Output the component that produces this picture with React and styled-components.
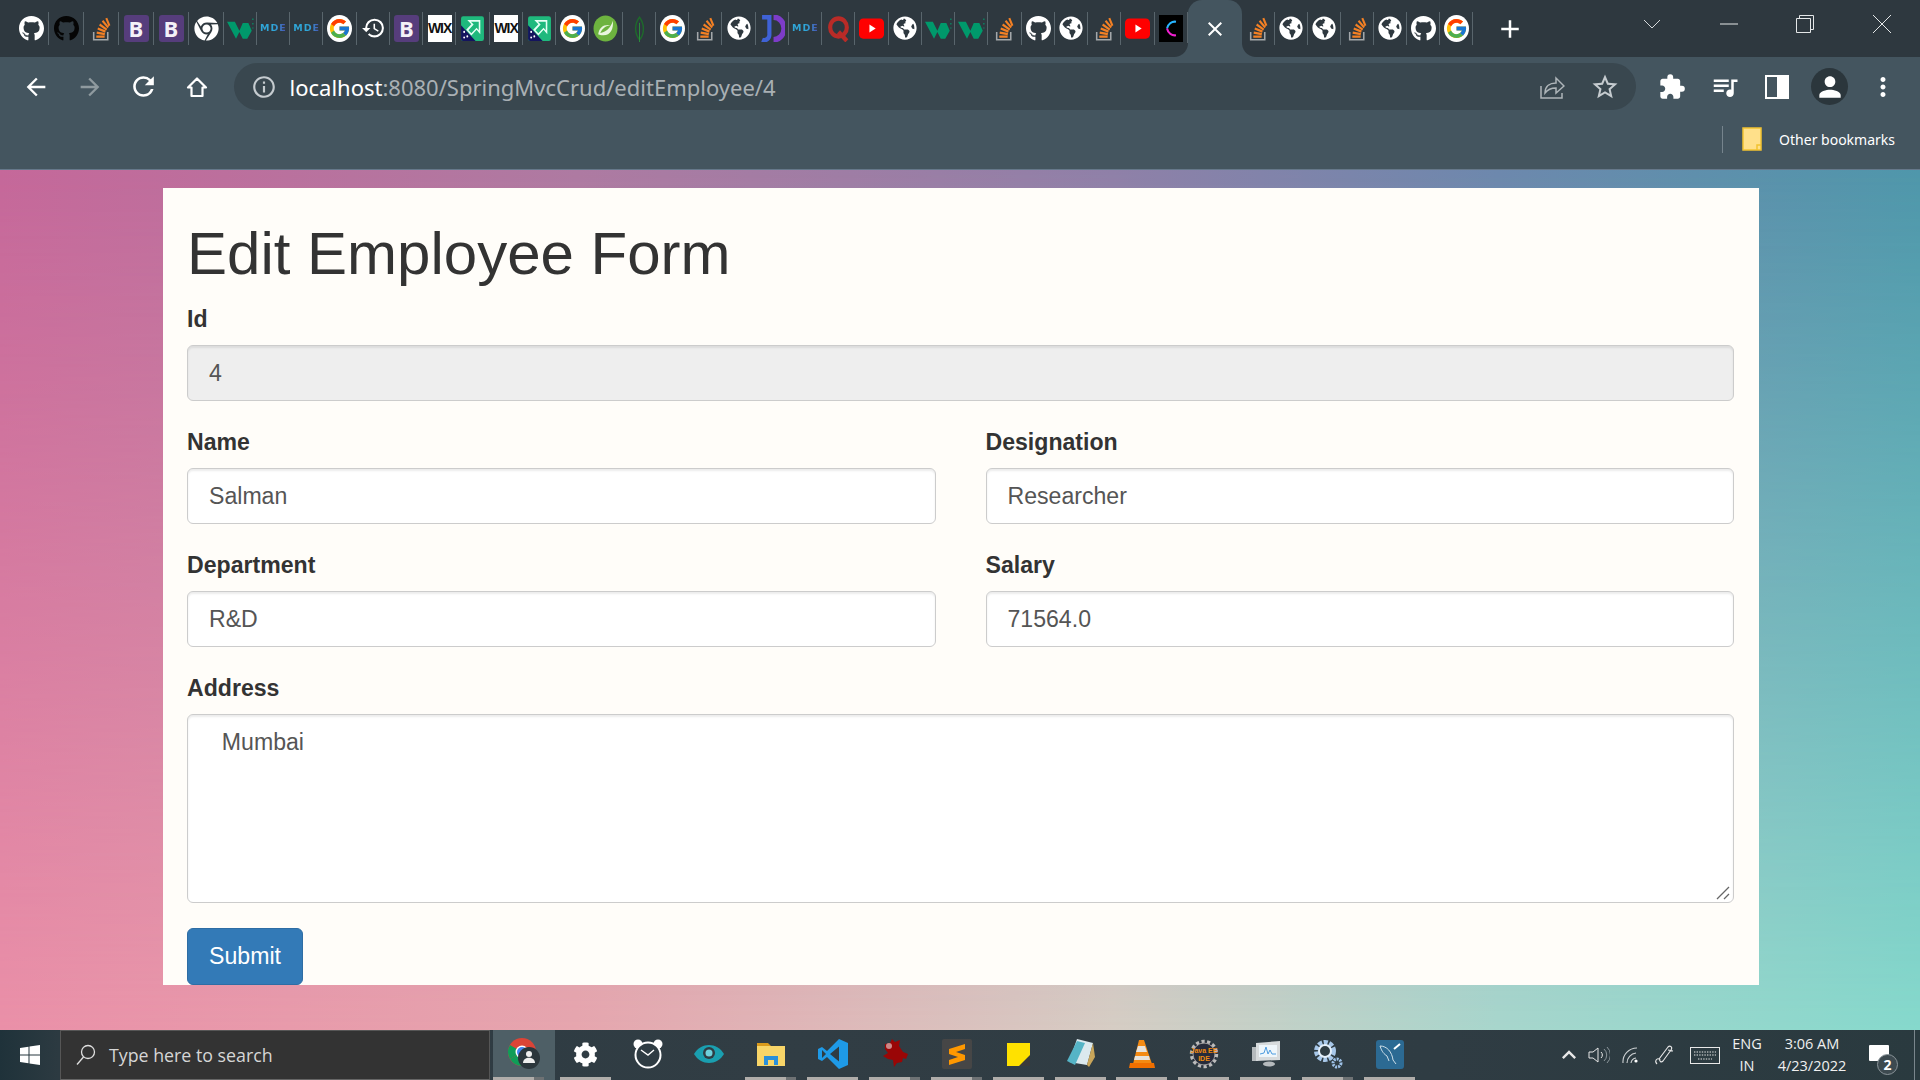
import styled, { createGlobalStyle } from "styled-components";
import { FaGithub, FaChrome, FaGlobeAmericas, FaCog } from "react-icons/fa";
import { FcGoogle } from "react-icons/fc";
import {
  MdArrowBack,
  MdArrowForward,
  MdRefresh,
  MdInfoOutline,
  MdStarBorder,
  MdExtension,
  MdQueueMusic,
  MdPerson,
  MdMoreVert,
  MdHistory,
  MdAdd,
  MdClose,
  MdKeyboardArrowUp,
} from "react-icons/md";

const CHROME_DARK = "#2e383f";
const CHROME_MID = "#44555f";

const GlobalStyle = createGlobalStyle`
  html, body {
    margin: 0;
    padding: 0;
    height: 100%;
    overflow: hidden;
  }
  * {
    box-sizing: border-box;
  }
`;

const Screen = styled.div`
  width: 1920px;
  height: 1080px;
  display: flex;
  flex-direction: column;
  font-family: "Liberation Sans", Arial, sans-serif;
`;

/* ---------- tab strip ---------- */

const TabStrip = styled.div`
  height: 57px;
  flex: none;
  display: flex;
  padding-left: 13.5px;
  background: ${CHROME_DARK};
`;

const TabCell = styled.div`
  width: ${(p) => p.$w}px;
  height: 57px;
  flex: none;
  display: flex;
  align-items: center;
  justify-content: center;
  position: relative;
  padding-bottom: 1px;
  &::after {
    content: "";
    position: absolute;
    right: 0;
    top: 12px;
    height: 33px;
    width: 1px;
    background: #59656c;
  }
`;

const ActiveTab = styled.div`
  width: 54px;
  height: 57px;
  flex: none;
  position: relative;
  display: flex;
  align-items: center;
  justify-content: center;
  color: #fff;
  font-size: 24px;
  background: ${CHROME_MID};
  border-radius: 14px 14px 0 0;
  &::before,
  &::after {
    content: "";
    position: absolute;
    bottom: 0;
    width: 14px;
    height: 14px;
  }
  &::before {
    left: -14px;
    background: radial-gradient(circle at 0 0, ${CHROME_DARK} 13.5px, ${CHROME_MID} 14.5px);
  }
  &::after {
    right: -14px;
    background: radial-gradient(circle at 100% 0, ${CHROME_DARK} 13.5px, ${CHROME_MID} 14.5px);
  }
`;

const NewTab = styled.div`
  width: 74px;
  display: flex;
  align-items: center;
  justify-content: center;
  color: #fff;
  font-size: 30px;
`;

const WindowControls = styled.div`
  margin-left: auto;
  display: flex;
`;

const WindowButton = styled.div`
  width: 76.5px;
  height: 48px;
  display: flex;
  align-items: center;
  justify-content: center;
`;

const FavBox = styled.span`
  width: ${(p) => p.$w || 25}px;
  height: 27px;
  display: flex;
  align-items: center;
  justify-content: center;
  color: ${(p) => p.$color || "#fff"};
  background: ${(p) => p.$bg || "transparent"};
  border-radius: ${(p) => p.$radius || 0};
  font-family: "Liberation Sans", Arial, sans-serif;
  font-weight: 700;
  line-height: 1;
`;

const BootLetter = styled(FavBox)`
  font-size: 22px;
  font-family: "Open Sans", sans-serif;
  border-radius: 3px;
  background: #563d7c;
  color: #f4f1f8;
`;

const WixLetter = styled(FavBox)`
  width: 24px;
  font-size: 14px;
  letter-spacing: -1px;
  background: #fff;
  color: #111;
`;

const MdeLetter = styled(FavBox)`
  width: 26px;
  font-size: 9.5px;
  letter-spacing: 1px;
  font-family: "DejaVu Sans", sans-serif;
  background: linear-gradient(90deg, #2fa6d8 55%, #4a4fb0);
  -webkit-background-clip: text;
  background-clip: text;
  color: transparent;
`;

const Svg = ({ children, w = 25, h = 27, box = "0 0 24 24" }) => (
  <svg width={w} height={h} viewBox={box} preserveAspectRatio="none">
    {children}
  </svg>
);

const StackFav = () => (
  <Svg>
    <path d="M4.5 15v7H18v-7" fill="none" stroke="#a3a7aa" strokeWidth="1.5" />
    <g stroke="#f48024" strokeWidth="2" fill="none">
      <path d="M7 19.2h8M7.4 15.6l7.8 1.4M8.4 12l7.4 2.8M10.2 8.4l6.8 4.6M13 5.2l5.4 6M16.6 2.8l3 6.8" />
    </g>
  </Svg>
);

const WaveFav = () => (
  <Svg w={27}>
    <path d="M0 6h7l4 8 3-7h5l3 7-4 7h-4l-3-6-3 6H8z" fill="#00996b" />
    <path d="M23 3v1.5M23 7v1.5M23 11v1" stroke="#00996b" strokeWidth="1" />
  </Svg>
);

const ArrowFav = () => (
  <Svg>
    <rect x="1" y="1" width="22" height="22" rx="2" fill="#1fb97d" />
    <path d="M1 9L15 23H3a2 2 0 0 1-2-2z" fill="#14145e" />
    <circle cx="4" cy="15" r=".9" fill="#fff" />
    <circle cx="7" cy="19" r=".9" fill="#fff" />
    <circle cx="4" cy="20" r=".9" fill="#fff" />
    <path d="M7 4.5h12.5V17l-3.6-3.8-5 5-5-5 5-5z" fill="#e7fff5" />
    <path d="M10.5 6h7.5v7.5l-2.1-2.2-5 5-2.8-2.8 5-5z" fill="#1fb97d" />
  </Svg>
);

const SpringFav = () => (
  <Svg>
    <circle cx="12" cy="12" r="11.5" fill="#6db33f" />
    <path d="M19 5c1 7-2 13-9 13-3 0-5-1-5-1 1-6 5-9 12-8-3 0-8 2-10 7 5-1 10-4 12-11z" fill="#e9f6de" />
  </Svg>
);

const LeafFav = () => (
  <Svg>
    <path d="M12 2c-5 6-5 14 0 20 5-5 5-14 0-20z" fill="none" stroke="#1e6a2b" strokeWidth="1.4" />
    <path d="M12 7v17" stroke="#2a8a3a" strokeWidth="1" />
  </Svg>
);

const JdFav = () => (
  <Svg>
    <path d="M2 2h7v15a5 5 0 0 1-7 5" fill="none" stroke="#3f62d6" strokeWidth="4" />
    <path d="M13 2a10 10 0 0 1 0 20" fill="none" stroke="#7d3cc9" strokeWidth="5" />
  </Svg>
);

const QuoraFav = () => (
  <Svg>
    <circle cx="12" cy="11" r="8" fill="none" stroke="#b92b27" strokeWidth="4" />
    <path d="M12 15l8 8" stroke="#b92b27" strokeWidth="4" />
  </Svg>
);

const YoutubeFav = () => (
  <Svg box="0 0 24 24">
    <rect x="0" y="3" width="24" height="18" rx="4" fill="#f00" />
    <path d="M10 8.5v7l6-3.5z" fill="#fff" />
  </Svg>
);

const CodeFav = () => (
  <FavBox $bg="#000" $w={24}>
    <Svg w={24} h={27}>
      <path d="M17 6a8 8 0 0 0-9 6" fill="none" stroke="#27b4ff" strokeWidth="2" />
      <path d="M8 12a8 8 0 0 0 9 6" fill="none" stroke="#f01fd0" strokeWidth="2" />
    </Svg>
  </FavBox>
);

const Favicon = ({ kind }) => {
  switch (kind) {
    case "gh":
      return <FavBox><FaGithub size={27} /></FavBox>;
    case "ghDark":
      return <FavBox $color="#050505"><FaGithub size={27} /></FavBox>;
    case "so":
      return <StackFav />;
    case "boot":
      return <BootLetter>B</BootLetter>;
    case "chrome":
      return <FavBox><FaChrome size={25} /></FavBox>;
    case "wave":
      return <WaveFav />;
    case "mde":
      return <MdeLetter>MDE</MdeLetter>;
    case "google":
      return <FavBox $bg="#fff" $radius="50%"><FcGoogle size={23} /></FavBox>;
    case "history":
      return <FavBox><MdHistory size={28} /></FavBox>;
    case "wix":
      return <WixLetter>WIX</WixLetter>;
    case "arrow":
      return <ArrowFav />;
    case "spring":
      return <SpringFav />;
    case "leaf":
      return <LeafFav />;
    case "globe":
      return <FavBox><FaGlobeAmericas size={24} /></FavBox>;
    case "jd":
      return <JdFav />;
    case "q":
      return <QuoraFav />;
    case "yt":
      return <YoutubeFav />;
    case "code":
      return <CodeFav />;
    default:
      return null;
  }
};

const tabsBefore = [
  "gh", "ghDark", "so", "boot", "boot", "chrome", "wave", "mde", "mde", "google",
  "history", "boot", "wix", "arrow", "wix", "arrow", "google", "spring", "leaf", "google",
  "so", "globe", "jd", "mde", "q", "yt", "globe", "wave", "wave", "so",
  "gh", "globe", "so", "yt", "code",
];
const tabsAfter = ["so", "globe", "globe", "so", "globe", "gh", "google"];

/* ---------- toolbar ---------- */

const Toolbar = styled.div`
  height: 113px;
  flex: none;
  background: ${CHROME_MID};
  border-bottom: 1px solid #66788a;
  display: flex;
  flex-direction: column;
`;

const NavRow = styled.div`
  height: 59px;
  display: flex;
  padding: 6px 10px 6px 9.5px;
`;

const ToolButton = styled.div`
  width: ${(p) => p.$w || 53.5}px;
  height: 47px;
  flex: none;
  display: flex;
  align-items: center;
  justify-content: center;
  color: ${(p) => p.$color || "#fff"};
  font-size: ${(p) => p.$size || 28}px;
`;

const AddressBar = styled.div`
  width: 1402px;
  height: 47px;
  margin: 0 10px 0 10px;
  flex: none;
  display: flex;
  align-items: center;
  padding: 0 4px 0 16px;
  border-radius: 24px;
  background: #39474f;
`;

const UrlText = styled.div`
  flex: 1;
  padding-left: 12px;
  font-family: "Noto Sans", sans-serif;
  font-size: 22px;
  color: #a9b0b4;
  white-space: nowrap;
`;

const UrlHost = styled.span`
  color: #fff;
`;

const Avatar = styled.span`
  width: 37px;
  height: 37px;
  border-radius: 50%;
  background: #2b363c;
  display: flex;
  align-items: center;
  justify-content: center;
  color: #fff;
  font-size: 32px;
`;

const BookmarkRow = styled.div`
  flex: 1;
  display: flex;
  align-items: center;
  justify-content: flex-end;
  padding: 0 25px 7px 0;
`;

const BookmarkDivider = styled.div`
  width: 1px;
  height: 27px;
  background: #76848d;
  margin-right: 19px;
`;

const BookmarkLabel = styled.span`
  margin-left: 17px;
  font-family: "Noto Sans", sans-serif;
  font-size: 14px;
  color: #fff;
  white-space: nowrap;
`;

/* ---------- page ---------- */

const Page = styled.div`
  flex: 1;
  position: relative;
  padding: 18px 161px 45px 163px;
  background: linear-gradient(90deg, #c5689a 0%, #ae7aa2 30%, #8f80a8 58%, #6d88ad 78%, #4f97ab 100%);
  &::before {
    content: "";
    position: absolute;
    inset: 0;
    background: linear-gradient(90deg, #ea90a8 0%, #e6a6ae 30%, #d6cdc4 58%, #a8d6cc 78%, #86d9cc 100%);
    -webkit-mask-image: linear-gradient(180deg, transparent 0%, #000 100%);
    mask-image: linear-gradient(180deg, transparent 0%, #000 100%);
  }
`;

const Card = styled.form`
  position: relative;
  height: 797px;
  padding: 33px 25px 0 24px;
  background: #fffdf9;
  color: #333;
  font-size: 23.1px;
  line-height: 33px;
`;

const Title = styled.h1`
  margin: 0 0 18px;
  height: 65px;
  font-size: 60px;
  font-weight: 500;
  line-height: 65px;
  color: #333;
`;

const Group = styled.div`
  margin-bottom: 26px;
`;

const Label = styled.label`
  display: block;
  height: 33px;
  margin-bottom: 8px;
  font-weight: 700;
  line-height: 31px;
`;

const Input = styled.input`
  display: block;
  width: 100%;
  height: 56px;
  padding: 0 20px 0 21px;
  border: 1px solid #ccc;
  border-radius: 6px;
  background: ${(p) => (p.disabled ? "#eee" : "#fff")};
  color: #555;
  opacity: 1;
  font: inherit;
  box-shadow: inset 0 2px 2px rgba(0, 0, 0, 0.075);
  outline: none;
`;

const TwoColumns = styled.div`
  display: grid;
  grid-template-columns: 1fr 1fr;
  column-gap: 50px;
`;

const TextAreaWrap = styled.div`
  position: relative;
`;

const TextArea = styled.textarea`
  display: block;
  width: 100%;
  height: 189px;
  padding: 11px 20px 10px 21px;
  border: 1px solid #ccc;
  border-radius: 6px;
  background: #fff;
  color: #555;
  font: inherit;
  line-height: 33px;
  box-shadow: inset 0 2px 2px rgba(0, 0, 0, 0.075);
  outline: none;
  resize: none;
`;

const ResizeGrip = styled.svg`
  position: absolute;
  right: 4px;
  bottom: 3px;
`;

const SubmitButton = styled.button`
  display: block;
  width: 116px;
  height: 57px;
  margin-top: -1px;
  padding: 0;
  border: 1px solid #2e6da4;
  border-radius: 6px;
  background: #337ab7;
  color: #fff;
  font: inherit;
`;

/* ---------- taskbar ---------- */

const Taskbar = styled.div`
  height: 50px;
  flex: none;
  display: flex;
  align-items: stretch;
  background: linear-gradient(90deg, #1f323a 0%, #2c3a41 3%, #313d44 40%, #2f3c43 75%, #2a3a3f 100%);
  color: #fff;
`;

const StartButton = styled.div`
  width: 60px;
  display: flex;
  align-items: center;
  justify-content: center;
`;

const SearchBox = styled.div`
  width: 430px;
  margin-right: 3px;
  display: flex;
  align-items: center;
  padding-left: 15px;
  background: #333;
  border: 1px solid #565656;
  border-bottom-color: #666;
  font-family: "Open Sans", sans-serif;
  font-size: 17.8px;
  color: #d6d6d6;
`;

const SearchText = styled.span`
  margin-left: 13px;
  white-space: nowrap;
`;

const AppButton = styled.div`
  width: 61.85px;
  flex: none;
  position: relative;
  display: flex;
  align-items: center;
  justify-content: center;
  padding-bottom: 2px;
  background: ${(p) => (p.$active ? "#4e5f66" : "transparent")};
  &::after {
    content: "";
    display: ${(p) => (p.$open ? "block" : "none")};
    position: absolute;
    left: ${(p) => (p.$active ? 0 : "5px")};
    bottom: 0;
    width: ${(p) => (p.$stack ? "41px" : "51px")};
    height: 3px;
    background: #b0adaa;
    box-shadow: ${(p) => (p.$stack ? "10px 0 0 #6e7274" : "none")};
  }
`;

const Tray = styled.div`
  margin-left: auto;
  display: flex;
  align-items: center;
  padding-right: 10px;
`;

const TraySlot = styled.div`
  width: ${(p) => p.$w}px;
  display: flex;
  align-items: center;
  justify-content: center;
  color: #e8e8e8;
`;

const TrayText = styled.div`
  width: ${(p) => p.$w}px;
  text-align: center;
  font-family: "Open Sans", sans-serif;
  font-size: 14.5px;
  line-height: 22px;
  color: #f0f0f0;
  white-space: nowrap;
`;

const Notification = styled.div`
  width: 40px;
  height: 34px;
  margin-left: 7px;
  position: relative;
`;

const NotifyBubble = styled.div`
  position: absolute;
  left: 5px;
  top: 7px;
  width: 20px;
  height: 16px;
  background: #fff;
  border-radius: 1px;
`;

const NotifyBadge = styled.div`
  position: absolute;
  left: 13px;
  top: 16px;
  width: 21px;
  height: 21px;
  border-radius: 50%;
  background: #3d4a50;
  border: 1px solid #8a9499;
  display: flex;
  align-items: center;
  justify-content: center;
  font-family: "Open Sans", sans-serif;
  font-weight: 700;
  font-size: 14px;
  color: #fff;
`;

const EdgeLine = styled.div`
  width: 1px;
  margin-right: 5px;
  background: #7a868c;
`;

const ChromeTask = () => (
  <svg width="34" height="38" viewBox="0 0 34 38">
    <g transform="translate(0 2)">
      <circle cx="15" cy="15" r="14" fill="#db4437" />
      <path d="M15 15L2.9 22A14 14 0 0 1 3 8z" fill="#0f9d58" />
      <path d="M15 15L3 22A14 14 0 0 0 15 29z" fill="#0f9d58" />
      <path d="M15 15H29A14 14 0 0 1 15 29z" fill="#ffcd40" />
      <circle cx="15" cy="15" r="6.5" fill="#fff" />
      <circle cx="15" cy="15" r="5" fill="#4285f4" />
    </g>
    <circle cx="22" cy="23" r="11" fill="#2b363c" />
    <circle cx="22" cy="19" r="3" fill="#eee" />
    <path d="M16 28c0-7 12-7 12 0z" fill="#eee" />
  </svg>
);

const ClockTask = () => (
  <svg width="30" height="30" viewBox="0 0 30 30">
    <circle cx="5" cy="5" r="4.5" fill="#fff" />
    <circle cx="25" cy="5" r="4.5" fill="#fff" />
    <circle cx="15" cy="16" r="12.5" fill="#2f3c43" stroke="#fff" strokeWidth="2" />
    <path d="M8 11l7 5 6-5" fill="none" stroke="#fff" strokeWidth="1.4" />
  </svg>
);

const EyeTask = () => (
  <svg width="30" height="20" viewBox="0 0 30 20">
    <path d="M0 10C7-2 23-2 30 10 23 22 7 22 0 10z" fill="#1a9fb0" />
    <circle cx="15" cy="9" r="6" fill="#2f3c43" />
    <circle cx="15" cy="9" r="3.5" fill="#6fd0dc" />
  </svg>
);

const FolderTask = () => (
  <svg width="28" height="24" viewBox="0 0 28 24">
    <path d="M0 1h11l3 3H0z" fill="#d99a1c" />
    <rect y="4" width="28" height="20" fill="#f8d568" />
    <path d="M7 23v-9h14v9h-4v-5h-6v5z" fill="#2a8fd8" />
  </svg>
);

const VsCodeTask = () => (
  <svg width="30" height="30" viewBox="0 0 30 30">
    <path d="M21 0l9 4v22l-9 4-12-12-5 4-4-2V10l4-2 5 4z" fill="#1e9ae8" />
    <path d="M21 7.5L12 15l9 7.5zM4 11v8l4-4z" fill="#2f3c43" />
  </svg>
);

const SplatTask = () => (
  <svg width="30" height="30" viewBox="0 0 30 30">
    <path d="M5 5l5-1 2-4 3 3 5-2-1 6 4 6 5 2-2 5-3-1-1 4-5 1-3 4-1-7-5-1-5-3 5-3-3-4z" fill="#9a0606" />
    <circle cx="9" cy="7" r="3" fill="#c88" />
  </svg>
);

const SublimeTask = () => (
  <svg width="30" height="30" viewBox="0 0 30 30">
    <rect width="30" height="30" rx="2" fill="#464646" />
    <path d="M7 10l16-5v5l-9 3 9 3v5L7 26v-5l9-3-9-3z" fill="#ff9800" />
  </svg>
);

const StickyTask = () => (
  <svg width="23" height="23" viewBox="0 0 23 23">
    <rect width="23" height="23" fill="#ffe100" />
    <path d="M23 12v11H12z" fill="#3a3a3a" />
  </svg>
);

const NotepadTask = () => (
  <svg width="28" height="30" viewBox="0 0 28 30">
    <path d="M10 0l16 4-6 22-18-3z" fill="#dbe9ee" />
    <path d="M0 22L10 2l8 2-10 22z" fill="#55b4c6" />
    <path d="M26 4l2 14-6 10-2-2z" fill="#c9a65a" />
  </svg>
);

const VlcTask = () => (
  <svg width="26" height="30" viewBox="0 0 26 30">
    <path d="M10 1h5l8 24h-19z" fill="#f48a12" />
    <path d="M9 7h7l2 6h-11zM6 17h14l1 4H5z" fill="#e7e2da" />
    <path d="M1 24h24l1 5H0z" fill="#f06f00" />
  </svg>
);

const JavaTask = () => (
  <svg width="30" height="30" viewBox="0 0 30 30">
    <circle cx="15" cy="15" r="12.5" fill="#262b3a" stroke="#bbb" strokeWidth="3.4" strokeDasharray="3.2 2.4" />
    <circle cx="15" cy="15" r="11" fill="none" stroke="#999" strokeWidth="1" />
    <text x="15" y="14" textAnchor="middle" fontSize="7" fontWeight="700" fill="#f08a10" fontFamily="Liberation Sans">Java EE</text>
    <text x="15" y="22" textAnchor="middle" fontSize="7" fontWeight="700" fill="#f08a10" fontFamily="Liberation Sans">IDE</text>
  </svg>
);

const MonitorTask = () => (
  <svg width="28" height="26" viewBox="0 0 28 26">
    <rect x="0" y="6" width="6" height="14" fill="#b5babd" />
    <path d="M4 2l24-2v19l-24 1z" fill="#d7dbdd" />
    <rect x="7" y="4" width="18" height="12" fill="#eef6fb" />
    <path d="M8 13l4-1 2-6 2 7 2-4 2 4h4" fill="none" stroke="#4d9ce0" strokeWidth="1" />
    <ellipse cx="17" cy="23" rx="6" ry="2.5" fill="#b5babd" />
  </svg>
);

const GearsTask = () => (
  <svg width="30" height="30" viewBox="0 0 30 30">
    <circle cx="12" cy="12" r="8.5" fill="none" stroke="#a8c8ea" strokeWidth="5" strokeDasharray="4 1.5" />
    <circle cx="12" cy="12" r="6" fill="none" stroke="#e4effa" strokeWidth="2" />
    <circle cx="24" cy="24" r="4" fill="none" stroke="#9ec2e8" strokeWidth="3" strokeDasharray="2 1" />
  </svg>
);

const MysqlTask = () => (
  <svg width="28" height="29" viewBox="0 0 28 29">
    <rect width="28" height="29" rx="3" fill="#2c6a93" />
    <path d="M4 6c7 0 12 6 13 14l3 4M4 6c2 6 4 8 7 10l2 5" fill="none" stroke="#cfe0ea" strokeWidth="1" />
    <path d="M18 9l6-5" stroke="#fff" strokeWidth="2" />
  </svg>
);

const apps = [
  { icon: <ChromeTask />, open: true, stack: true, active: true },
  { icon: <FaCog size={25} color="#fff" />, open: true },
  { icon: <ClockTask /> },
  { icon: <EyeTask /> },
  { icon: <FolderTask />, open: true, stack: true },
  { icon: <VsCodeTask />, open: true },
  { icon: <SplatTask />, open: true, stack: true },
  { icon: <SublimeTask />, open: true, stack: true },
  { icon: <StickyTask />, open: true },
  { icon: <NotepadTask />, open: true },
  { icon: <VlcTask />, open: true },
  { icon: <JavaTask />, open: true },
  { icon: <MonitorTask />, open: true },
  { icon: <GearsTask />, open: true, stack: true },
  { icon: <MysqlTask />, open: true },
];

const App = () => {
  return (
    <Screen>
      <GlobalStyle />
      <TabStrip>
        {tabsBefore.map((kind, i) => (
          <TabCell $w={i < 6 ? 35 : 33.25} key={i}>
            <Favicon kind={kind} />
          </TabCell>
        ))}
        <ActiveTab>
          <MdClose />
        </ActiveTab>
        {tabsAfter.map((kind, i) => (
          <TabCell $w={33} key={i}>
            <Favicon kind={kind} />
          </TabCell>
        ))}
        <NewTab>
          <MdAdd />
        </NewTab>
        <WindowControls>
          <WindowButton>
            <svg width="18" height="10" viewBox="0 0 18 10">
              <path d="M1 1l8 8 8-8" fill="none" stroke="#d5d9db" strokeWidth="1" />
            </svg>
          </WindowButton>
          <WindowButton>
            <svg width="18" height="2" viewBox="0 0 18 2">
              <path d="M0 1h18" stroke="#e4e7e8" strokeWidth="1" />
            </svg>
          </WindowButton>
          <WindowButton>
            <svg width="18" height="18" viewBox="0 0 18 18">
              <path d="M3.5 3.5V.5h14v14h-3M.5 3.5h14v14H.5z" fill="none" stroke="#e4e7e8" strokeWidth="1" />
            </svg>
          </WindowButton>
          <WindowButton>
            <svg width="18" height="18" viewBox="0 0 18 18">
              <path d="M0 0l18 18M18 0L0 18" stroke="#e4e7e8" strokeWidth="1" />
            </svg>
          </WindowButton>
        </WindowControls>
      </TabStrip>

      <Toolbar>
        <NavRow>
          <ToolButton><MdArrowBack /></ToolButton>
          <ToolButton $color="#8f9a9f"><MdArrowForward /></ToolButton>
          <ToolButton $size={31}><MdRefresh /></ToolButton>
          <ToolButton>
            <svg width="24" height="24" viewBox="0 0 24 24">
              <path d="M12 3.5L3 12.5h3.5V21h11v-8.500H21z" fill="none" stroke="#fff" strokeWidth="2.2" strokeLinejoin="round" />
            </svg>
          </ToolButton>
          <AddressBar>
            <ToolButton $w={28} $size={26} $color="#c5cbcf"><MdInfoOutline /></ToolButton>
            <UrlText>
              <UrlHost>localhost</UrlHost>:8080/SpringMvcCrud/editEmployee/4
            </UrlText>
            <ToolButton $w={53} $color="#aeb5b9">
              <svg width="26" height="26" viewBox="0 0 26 26">
                <path d="M2 12v12h21v-5" fill="none" stroke="currentColor" strokeWidth="1.5" />
                <path d="M6 19c0-7 5-10 11-10V4l8 8-8 7v-5c-5 0-8 1-11 5z" fill="none" stroke="currentColor" strokeWidth="1.5" />
              </svg>
            </ToolButton>
            <ToolButton $w={53} $size={30} $color="#c5cbcf"><MdStarBorder /></ToolButton>
          </AddressBar>
          <ToolButton $w={52.7}><MdExtension /></ToolButton>
          <ToolButton $w={52.7} $size={30}><MdQueueMusic /></ToolButton>
          <ToolButton $w={52.7}>
            <svg width="24" height="24" viewBox="0 0 24 24">
              <rect width="24" height="24" fill="#fff" />
              <rect x="2" y="2" width="10" height="20" fill={CHROME_MID} />
            </svg>
          </ToolButton>
          <ToolButton $w={52.7}>
            <Avatar><MdPerson /></Avatar>
          </ToolButton>
          <ToolButton $w={52.7} $size={30}><MdMoreVert /></ToolButton>
        </NavRow>
        <BookmarkRow>
          <BookmarkDivider />
          <svg width="20" height="24" viewBox="0 0 20 24">
            <path d="M1 1h18v22H1z" fill="#ffe08a" stroke="#f2c230" strokeWidth="1.5" />
            <path d="M15 23v-5h4" fill="none" stroke="#f2c230" strokeWidth="1.5" />
          </svg>
          <BookmarkLabel>Other bookmarks</BookmarkLabel>
        </BookmarkRow>
      </Toolbar>

      <Page>
        <Card onSubmit={(e) => e.preventDefault()}>
          <Title>Edit Employee Form</Title>
          <Group>
            <Label>Id</Label>
            <Input value="4" disabled readOnly />
          </Group>
          <TwoColumns>
            <Group>
              <Label>Name</Label>
              <Input defaultValue="Salman" />
            </Group>
            <Group>
              <Label>Designation</Label>
              <Input defaultValue="Researcher" />
            </Group>
            <Group>
              <Label>Department</Label>
              <Input defaultValue="R&D" />
            </Group>
            <Group>
              <Label>Salary</Label>
              <Input defaultValue="71564.0" />
            </Group>
          </TwoColumns>
          <Group>
            <Label>Address</Label>
            <TextAreaWrap>
              <TextArea defaultValue="  Mumbai" />
              <ResizeGrip width="14" height="14" viewBox="0 0 14 14">
                <path d="M1 13L13 1M8 13l5-5" stroke="#666" strokeWidth="1.3" />
              </ResizeGrip>
            </TextAreaWrap>
          </Group>
          <SubmitButton type="submit">Submit</SubmitButton>
        </Card>
      </Page>

      <Taskbar>
        <StartButton>
          <svg width="20" height="20" viewBox="0 0 20 20">
            <path d="M0 3l8.500-1.200v7.700H0zM9.500 1.600L20 0v9.500H9.500zM0 10.500h8.500v7.700L0 17zM9.500 10.500H20V20L9.500 18.400z" fill="#fff" />
          </svg>
        </StartButton>
        <SearchBox>
          <svg width="20" height="22" viewBox="0 0 20 22">
            <circle cx="12" cy="8" r="6.5" fill="none" stroke="#e0e0e0" strokeWidth="1.3" />
            <path d="M7.500 13L1 20.500" stroke="#e0e0e0" strokeWidth="1.3" />
          </svg>
          <SearchText>Type here to search</SearchText>
        </SearchBox>
        {apps.map((app, i) => (
          <AppButton key={i} $open={app.open} $stack={app.stack} $active={app.active}>
            {app.icon}
          </AppButton>
        ))}
        <Tray>
          <TraySlot $w={28}><MdKeyboardArrowUp size={28} /></TraySlot>
          <TraySlot $w={32}>
            <svg width="22" height="18" viewBox="0 0 22 18">
              <path d="M1 6h4l5-4v14l-5-4H1z" fill="none" stroke="#e8e8e8" strokeWidth="1" />
              <path d="M13 6a4 4 0 0 1 0 6" fill="none" stroke="#e8e8e8" strokeWidth="1" />
              <path d="M16 3a8 8 0 0 1 0 12M19 1a11 11 0 0 1 0 16" fill="none" stroke="#8d979c" strokeWidth="1" />
            </svg>
          </TraySlot>
          <TraySlot $w={32}>
            <svg width="18" height="18" viewBox="0 0 18 18">
              <path d="M1 17a14 14 0 0 1 14-15M5 17A10 10 0 0 1 14 7M9 17a6 6 0 0 1 5-5" fill="none" stroke="#cfd3d5" strokeWidth="1.1" />
              <circle cx="14" cy="15" r="1.6" fill="#fff" />
            </svg>
          </TraySlot>
          <TraySlot $w={36}>
            <svg width="22" height="22" viewBox="0 0 22 22">
              <path d="M3 20c-3-3 0-6 2-5l9-12c2-2 5 0 3 3L9 17c-2 2-4 0-3-2M14 6l5 1" fill="none" stroke="#e8e8e8" strokeWidth="1.1" />
            </svg>
          </TraySlot>
          <TraySlot $w={44}>
            <svg width="30" height="17" viewBox="0 0 30 17">
              <rect x=".5" y=".5" width="29" height="16" fill="none" stroke="#e8e8e8" />
              <path d="M4 5h22M4 8h22M8 12h14" stroke="#e8e8e8" strokeDasharray="1.4 1.2" />
            </svg>
          </TraySlot>
          <TrayText $w={40}>
            ENG
            <br />
            IN
          </TrayText>
          <TrayText $w={90}>
            3:06 AM
            <br />
            4/23/2022
          </TrayText>
          <Notification>
            <NotifyBubble />
            <NotifyBadge>2</NotifyBadge>
          </Notification>
        </Tray>
        <EdgeLine />
      </Taskbar>
    </Screen>
  );
};

export default App;
